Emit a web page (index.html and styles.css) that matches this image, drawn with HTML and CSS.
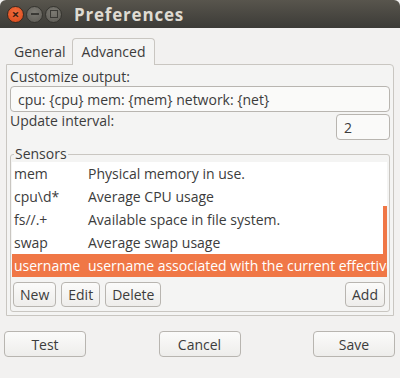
FILE: index.html
```html
<!DOCTYPE html>
<html lang="en">
<head>
    <meta charset="UTF-8">
    <title>Preferences</title>
    <link rel="stylesheet" href="styles.css">
</head>
<body>
    <div class="window">
        <div class="titlebar">
            <span class="wbtn close">&times;</span>
            <span class="wbtn min"><i class="dash"></i></span>
            <span class="wbtn max"><i class="sq"></i></span>
            <span class="title">Preferences</span>
        </div>
        <div class="content">
            <div class="tabs">
                <div class="tab">General</div>
                <div class="tab active">Advanced</div>
            </div>
            <div class="panel">
                <div class="label">Customize output:</div>
                <input class="entry" type="text" value="cpu: {cpu} mem: {mem} network: {net}">
                <div class="interval-row">
                    <div class="label up">Update interval:</div>
                    <input class="spin" type="text" value="2">
                </div>
                <fieldset class="sensors">
                    <legend>Sensors</legend>
                    <div class="list">
                        <div class="row"><span class="key">mem</span><span>Physical memory in use.</span></div>
                        <div class="row"><span class="key">cpu\d*</span><span>Average CPU usage</span></div>
                        <div class="row"><span class="key">fs//.+</span><span>Available space in file system.</span></div>
                        <div class="row"><span class="key">swap</span><span>Average swap usage</span></div>
                        <div class="row selected"><span class="key">username</span><span>username associated with the current effective user</span></div>
                        <div class="scrollbar"></div>
                    </div>
                    <div class="list-buttons">
                        <button>New</button>
                        <button>Edit</button>
                        <button>Delete</button>
                        <span class="spacer"></span>
                        <button>Add</button>
                    </div>
                </fieldset>
            </div>
            <div class="actions">
                <button class="big">Test</button>
                <button class="big">Cancel</button>
                <button class="big">Save</button>
            </div>
        </div>
    </div>
</body>
</html>
```

FILE: styles.css
```css
body {
    margin: 0;
    background: #f2f1f0;
    font-family: "Open Sans", "DejaVu Sans", sans-serif;
    font-size: 13px;
    color: #3c3c3c;
}
.window {
    width: 400px;
    height: 378px;
    overflow: hidden;
}
.titlebar {
    height: 28px;
    background: linear-gradient(to bottom, #58554d, #3c3b37);
    border-radius: 6px 6px 0 0;
    display: flex;
    align-items: center;
    padding-left: 7px;
}
.wbtn {
    width: 17px;
    height: 17px;
    border-radius: 50%;
    margin-right: 2px;
    display: flex;
    align-items: center;
    justify-content: center;
    box-sizing: border-box;
}
.close {
    background: radial-gradient(circle at 50% 35%, #f26d3d, #d8491b);
    border: 1px solid #3a2a20;
    color: #3a1f14;
    font-size: 13px;
    font-weight: bold;
    line-height: 1;
}
.min, .max {
    background: radial-gradient(circle at 50% 35%, #7c7a73, #5c5a54);
    border: 1px solid #35342f;
}
.dash {
    width: 8px;
    height: 2px;
    background: #3a3935;
}
.sq {
    width: 6px;
    height: 6px;
    border: 1.5px solid #3a3935;
}
.title {
    margin-left: 10px;
    color: #dfdbd2;
    font-weight: bold;
    font-size: 17px;
    letter-spacing: 0.8px;
}
.content {
    padding: 10px 6px 0 6px;
}
.tabs {
    display: flex;
    align-items: flex-end;
    height: 26px;
    padding-left: 2px;
}
.tab {
    padding: 3px 6px 3px 6px;
    font-size: 14px;
    color: #3c3c3c;
}
.tab.active {
    background: #f4f4f3;
    border: 1px solid #c9c6c1;
    border-bottom: none;
    border-radius: 4px 4px 0 0;
    padding: 3px 9px 4px 9px;
    margin-bottom: -1px;
    position: relative;
    z-index: 1;
}
.panel {
    border: 1px solid #c9c6c1;
    border-radius: 0 4px 0 0;
    background: #f4f4f3;
    height: 252px;
    padding: 2px 3px 0 3px;
    box-sizing: border-box;
}
.label {
    font-size: 14px;
    line-height: 19px;
}
.label.up {
    margin-top: -3px;
}
.entry {
    display: block;
    width: 100%;
    box-sizing: border-box;
    height: 26px;
    border: 1px solid #b8b5b0;
    border-radius: 4px;
    background: #fafaf9;
    font-family: inherit;
    font-size: 14px;
    color: #3c3c3c;
    padding: 0 7px;
}
.interval-row {
    display: flex;
    justify-content: space-between;
    align-items: flex-start;
    margin-top: 2px;
}
.spin {
    width: 54px;
    height: 26px;
    box-sizing: border-box;
    border: 1px solid #b8b5b0;
    border-radius: 4px;
    background: #fafaf9;
    font-family: inherit;
    font-size: 14px;
    color: #3c3c3c;
    padding: 0 7px;
}
.sensors {
    min-width: 0;
    margin: 7px 0 0 0;
    padding: 0 2px 4px 1px;
    border: 1px solid #c9c6c1;
    border-radius: 3px;
}
.sensors legend {
    font-size: 14px;
    padding: 0 1px;
    margin-left: 2px;
    line-height: 14px;
}
.list {
    background: #ffffff;
    position: relative;
    overflow: hidden;
    margin-top: 1px;
}
.row {
    display: flex;
    height: 23px;
    align-items: center;
    padding-left: 2px;
    font-size: 14px;
    white-space: nowrap;
    overflow: hidden;
}
.key {
    width: 74px;
    flex-shrink: 0;
}
.row.selected {
    background: #f07746;
    color: #ffffff;
}
.scrollbar {
    position: absolute;
    right: 0;
    top: 44px;
    width: 4px;
    height: 49px;
    background: #f07746;
}
.list-buttons {
    display: flex;
    gap: 5px;
    margin-top: 5px;
    padding-left: 1px;
    padding-right: 2px;
}
.spacer {
    flex: 1;
}
button {
    font-family: inherit;
    font-size: 14px;
    color: #3c3c3c;
    height: 25px;
    padding: 0 6px;
    border: 1px solid #b8b5b0;
    border-radius: 4px;
    background: linear-gradient(to bottom, #fbfbfa, #eeedeb);
}
.actions {
    display: flex;
    justify-content: space-between;
    margin-top: 15px;
    margin-left: -2px;
    margin-right: -1px;
}
button.big {
    width: 82px;
    height: 26px;
}
```
